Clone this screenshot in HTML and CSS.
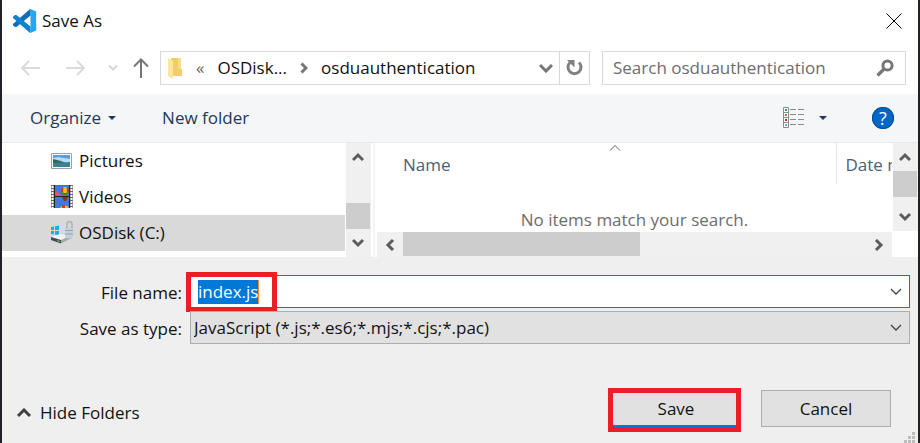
FILE: index.html
```html
<!DOCTYPE html>
<html lang="en">
<head>
    <meta charset="UTF-8">
    <meta name="viewport" content="width=device-width, initial-scale=1.0">
    <title>Save As</title>
    <link rel="stylesheet" href="styles.css">
</head>
<body>
    <main class="dialog">
        <header class="titlebar">
            <svg class="logo" width="24" height="24" viewBox="0 0 24 24">
                <path d="M17.5 0 23.2 2.5v19L17.5 24z" fill="#27a5f2"/>
                <path d="M17.5 0v6.6L3.4 17.9 2 18 0 16.3v-1.4L16.2.7z" fill="#0a6fb8"/>
                <path d="M17.5 24v-6.6L3.4 6.1 2 6 0 7.7v1.4l16.2 14.2z" fill="#0b83cf"/>
            </svg>
            <h1>Save As</h1>
            <button class="icon-btn close" aria-label="Close">
                <svg width="16" height="16" viewBox="0 0 16 16"><path d="M.5.5l15 15M15.5.5l-15 15" stroke="#000"/></svg>
            </button>
        </header>

        <nav class="nav-row">
            <div class="history">
                <button class="icon-btn" aria-label="Back" disabled>
                    <svg width="20" height="18" viewBox="0 0 20 18"><path d="M9 2L2 9l7 7M2 9h18" fill="none" stroke="#dadada" stroke-width="2"/></svg>
                </button>
                <button class="icon-btn" aria-label="Forward" disabled>
                    <svg width="20" height="18" viewBox="0 0 20 18"><path d="M11 2l7 7-7 7M18 9H0" fill="none" stroke="#dadada" stroke-width="2"/></svg>
                </button>
                <button class="icon-btn small" aria-label="Recent locations" disabled>
                    <svg width="10" height="8" viewBox="0 0 10 8"><path d="M1 1.5l4 4 4-4" fill="none" stroke="#d6d6d6" stroke-width="2"/></svg>
                </button>
                <button class="icon-btn small" aria-label="Up">
                    <svg width="16" height="20" viewBox="0 0 16 20"><path d="M1 8.500l7-7 7 7M8 2v18" fill="none" stroke="#767676" stroke-width="2"/></svg>
                </button>
            </div>
            <div class="address">
                <svg class="folder" width="16" height="22" viewBox="0 0 16 22">
                    <path d="M4 1h10v11h1v7H4z" fill="#f3cc66"/>
                    <path d="M11 1h3v11h-3z" fill="#f8dc85"/>
                    <path d="M1 1l5 3v18l-5-3z" fill="#fde59b"/>
                </svg>
                <span class="more">«</span>
                <a href="#">OSDisk...</a>
                <svg width="8" height="12" viewBox="0 0 8 12"><path d="M1.500 1.500L6 6l-4.500 4.500" fill="none" stroke="#767676" stroke-width="3"/></svg>
                <a href="#">osduauthentication</a>
                <button class="icon-btn expand" aria-label="Previous locations">
                    <svg width="14" height="10" viewBox="0 0 14 10"><path d="M1 2l6 6 6-6" fill="none" stroke="#767676" stroke-width="3"/></svg>
                </button>
                <button class="icon-btn refresh" aria-label="Refresh">
                    <svg width="18" height="18" viewBox="0 0 18 18">
                        <path d="M13 3.500a6.500 6.500 0 1 1-9 0" fill="none" stroke="#808080" stroke-width="3"/>
                        <path d="M1 1h7.500v7.500z" fill="#808080"/>
                    </svg>
                </button>
            </div>
            <label class="search">
                <input type="search" placeholder="Search osduauthentication" aria-label="Search osduauthentication">
                <svg width="18" height="18" viewBox="0 0 18 18"><circle cx="11.500" cy="6.500" r="4.600" fill="none" stroke="#767676" stroke-width="3"/><path d="M8 10l-6.500 6.500" stroke="#767676" stroke-width="3.200"/></svg>
            </label>
        </nav>

        <div class="toolbar">
            <button class="tool">Organize <span class="caret"></span></button>
            <button class="tool">New folder</button>
            <button class="icon-btn view" aria-label="Change your view">
                <svg width="22" height="22" viewBox="0 0 22 22">
                    <path d="M.5.500h5v20h-5zM.5 5.500h5M.5 10.500h5M.5 15.500h5" fill="#fff" stroke="#8c8c8c"/>
                    <path d="M7 2.500h6M15 2.500h6M7 7.500h6M15 7.500h6M7 12.500h6M15 12.500h6M7 17.500h6M15 17.500h6" stroke="#8c8c8c"/>
                    <path d="M2 2h2v2H2z" fill="#3b78c4"/><path d="M2 7h2v2H2z" fill="#7b8c2d"/><path d="M2 12h2v2H2z" fill="#c22"/><path d="M2 17h2v2H2z" fill="#7aa"/>
                </svg>
                <span class="caret"></span>
            </button>
            <button class="help" aria-label="Help">?</button>
        </div>

        <section class="browser">
            <ul class="tree">
                <li>
                    <svg width="24" height="24" viewBox="0 0 24 24">
                        <path d="M1.500 4.500h20v15h-20z" fill="#fff" stroke="#a0a0a0"/>
                        <path d="M3 6h17v12H3z" fill="#5b9be0"/>
                        <path d="M3 9l5-1 12 2v4H3z" fill="#b9dcf4"/>
                        <path d="M3 10l8 2 5 2H3z" fill="#2f6b50"/>
                        <path d="M3 14l17-1v5H3z" fill="#3f7f96"/>
                    </svg>
                    Pictures
                </li>
                <li>
                    <svg width="24" height="24" viewBox="0 0 24 24">
                        <path d="M1 0h22v23H1z" fill="#6b6b6b"/>
                        <path d="M2.500 1v22M21.500 1v22" stroke="#fff" stroke-width="2" stroke-dasharray="2 1"/>
                        <path d="M5 1h14v10H5zM5 12h14v11H5z" fill="#3f7bd8"/>
                        <path d="M4.500 0v23M19.500 0v23M4 11.500h16" stroke="#222"/>
                        <path d="M5 6l3 1 3 4H5z" fill="#d9596b"/>
                        <circle cx="15" cy="6" r="4" fill="#d33a26"/><path d="M13.500 2h3l.5 6h-4z" fill="#f2c21b"/><path d="M11 7h2l2 3h-1z" fill="#3b8f3d"/><path d="M19 7h-2l-2 3h1z" fill="#3b8f3d"/>
                        <path d="M12 12h6l-2 4h-2z" fill="#902d1d"/>
                        <path d="M10 23a5 5 0 0 1 9 0z" fill="#f2c21b"/><path d="M12 20h3v3h-3z" fill="#d33a26"/>
                    </svg>
                    Videos
                </li>
                <li class="selected">
                    <svg width="24" height="24" viewBox="0 0 24 24">
                        <path d="M1 6l3-.5V9H1zM5 5.300l4-.8V9H5zM1 10h3v3.500L1 13zM5 10h4v4.300l-4-.7z" fill="#08b4ee"/>
                        <path d="M1 16l9-3 12 2-11 5z" fill="#f2f2f2"/>
                        <path d="M1 16l10 3v3.500L1 19z" fill="#454a4c"/><path d="M11 19l11-5v3l-11 5.500z" fill="#a5a9aa"/>
                        <path d="M7 19l3 1v1l-3-1z" fill="#51df56"/>
                        <path d="M17 8V3q0-2.500 2.500-2.500T22 3v5" fill="none" stroke="#a9b5bb" stroke-width="1.600"/>
                        <path d="M15 7h8v9q-4 3-8 0z" fill="#c3d0d7"/><path d="M15 9.500h8M15 13h8" stroke="#8fa5b2"/>
                    </svg>
                    OSDisk (C:)
                </li>
            </ul>
            <div class="scroll vertical tree-scroll">
                <button aria-label="Scroll up"><svg width="12" height="10" viewBox="0 0 12 10"><path d="M1 8l5-5 5 5" fill="none" stroke="#5c5c5c" stroke-width="3"/></svg></button>
                <span class="thumb"></span>
                <button aria-label="Scroll down"><svg width="12" height="10" viewBox="0 0 12 10"><path d="M1 2l5 5 5-5" fill="none" stroke="#5c5c5c" stroke-width="3"/></svg></button>
            </div>
            <div class="splitter"></div>
            <div class="files">
                <div class="file-list">
                    <table>
                        <thead>
                            <tr>
                                <th class="name-col">Name</th>
                                <th class="date-col">Date modified</th>
                            </tr>
                        </thead>
                    </table>
                    <svg class="sort" width="12" height="8" viewBox="0 0 12 8"><path d="M1 6.500l5-5 5 5" fill="none" stroke="#606060"/></svg>
                    <p class="empty">No items match your search.</p>
                </div>
                <div class="scroll vertical file-scroll">
                    <button aria-label="Scroll up"><svg width="12" height="10" viewBox="0 0 12 10"><path d="M1 8l5-5 5 5" fill="none" stroke="#5c5c5c" stroke-width="3"/></svg></button>
                    <span class="thumb"></span>
                    <button aria-label="Scroll down"><svg width="12" height="10" viewBox="0 0 12 10"><path d="M1 2l5 5 5-5" fill="none" stroke="#5c5c5c" stroke-width="3"/></svg></button>
                </div>
                <div class="scroll horizontal">
                    <button aria-label="Scroll left"><svg width="10" height="12" viewBox="0 0 10 12"><path d="M8 1L3 6l5 5" fill="none" stroke="#5c5c5c" stroke-width="3"/></svg></button>
                    <span class="thumb"></span>
                    <button aria-label="Scroll right"><svg width="10" height="12" viewBox="0 0 10 12"><path d="M2 1l5 5-5 5" fill="none" stroke="#5c5c5c" stroke-width="3"/></svg></button>
                </div>
            </div>
        </section>

        <form class="save-form">
            <label for="filename">File name:</label>
            <div class="field filename">
                <input id="filename" type="text" value="index.js" autocomplete="off" spellcheck="false">
                <svg width="12" height="8" viewBox="0 0 12 8"><path d="M1 1l5 5 5-5" fill="none" stroke="#404040" stroke-width="1.300"/></svg>
                <span class="text-cursor"></span>
                <span class="highlight"></span>
            </div>
            <label for="filetype">Save as type:</label>
            <div class="field filetype">
                <select id="filetype">
                    <option>JavaScript (*.js;*.es6;*.mjs;*.cjs;*.pac)</option>
                </select>
                <svg width="12" height="8" viewBox="0 0 12 8"><path d="M1 1l5 5 5-5" fill="none" stroke="#404040" stroke-width="1.300"/></svg>
            </div>
        </form>

        <footer class="actions">
            <button class="hide-folders">
                <svg width="14" height="10" viewBox="0 0 14 10"><path d="M1 8l6-6 6 6" fill="none" stroke="#404040" stroke-width="3"/></svg>
                Hide Folders
            </button>
            <div class="save-wrap">
                <button class="btn primary">Save</button>
                <span class="highlight"></span>
            </div>
            <button class="btn">Cancel</button>
        </footer>
        <svg class="grip" width="12" height="12" viewBox="0 0 12 12"><path d="M8 0h3v3H8zM4 4h3v3H4zM8 4h3v3H8zM0 8h3v3H0zM4 8h3v3H4zM8 8h3v3H8z" fill="#bcbcbc"/></svg>
    </main>

    <script>
        // start with the suggested name selected
        const filename = document.getElementById('filename');
        filename.focus();
        filename.select();
    </script>
</body>
</html>
```
FILE: styles.css
```css
* {
    box-sizing: border-box;
}
body {
    margin: 0;
    background: #202124;
    font-family: "Open Sans", "Noto Sans", sans-serif;
    font-size: 17px;
    line-height: 24px;
    color: #111;
}
button, input, select {
    font: inherit;
    color: inherit;
    margin: 0;
    padding: 0;
    border: none;
    background: none;
}
svg {
    display: block;
    flex: none;
}
.dialog {
    position: relative;
    display: flex;
    flex-direction: column;
    min-height: 100vh;
    margin: 0 2px;
    background: #efefef;
}
.icon-btn {
    display: flex;
    align-items: center;
    justify-content: center;
}

/* title bar */
.titlebar {
    display: flex;
    align-items: center;
    height: 42px;
    padding: 0 16px 0 11px;
    background: #fff;
}
.titlebar h1 {
    flex: 1;
    margin: 0 0 0 5px;
    font-size: 17px;
    font-weight: 400;
}

/* navigation */
.nav-row {
    display: grid;
    grid-template-columns: 146px 430fr 304fr;
    column-gap: 12px;
    padding: 9px 12px 9px 0;
    background: #fff;
}
.history {
    display: flex;
    align-items: center;
    padding-left: 5px;
}
.history .icon-btn {
    flex: none;
    width: 46px;
}
.history .small {
    width: 28px;
}
.address {
    display: flex;
    align-items: center;
    height: 34px;
    padding-left: 6px;
    border: 1px solid #d9d9d9;
    white-space: nowrap;
}
.address a {
    margin: 0 13px;
    color: #111;
    text-decoration: none;
}
.address .more {
    margin-left: 13px;
    color: #666;
}
.expand {
    width: 26px;
    height: 32px;
    margin-left: auto;
}
.refresh {
    width: 30px;
    height: 32px;
    border-left: 1px solid #d9d9d9;
}
.search {
    display: flex;
    align-items: center;
    height: 34px;
    padding: 0 11px 0 10px;
    border: 1px solid #d9d9d9;
}
.search input {
    flex: 1;
    min-width: 0;
    outline: none;
}
.search input::placeholder {
    color: #6d6d6d;
}

/* command bar */
.toolbar {
    display: flex;
    align-items: center;
    height: 49px;
    padding: 0 24px 0 28px;
    background: #f5f6f7;
    border-bottom: 1px solid #e6e9ee;
}
.tool {
    display: flex;
    align-items: center;
    margin-right: 46px;
    color: #1e395b;
}
.caret {
    margin-left: 7px;
    border: 4px solid transparent;
    border-top-color: #1e395b;
    border-bottom: none;
}
.view {
    margin-left: auto;
}
.view .caret {
    margin-left: 14px;
}
.help {
    width: 22px;
    height: 22px;
    margin-left: 45px;
    border-radius: 50%;
    background: #0067c6;
    box-shadow: inset 0 0 0 1px #0a4f94;
    color: #fff;
    font-size: 18px;
    line-height: 22px;
}

/* folders and files */
.browser {
    display: flex;
    height: 114px;
    background: #fff;
}
.tree {
    width: 343px;
    margin: 0;
    padding: 0;
    list-style: none;
}
.tree li {
    display: flex;
    align-items: center;
    gap: 5px;
    height: 36px;
    padding-left: 48px;
}
.tree .selected {
    background: #d9d9d9;
}
.scroll {
    display: flex;
    background: #f0f0f0;
}
.scroll button {
    display: flex;
    align-items: center;
    justify-content: center;
    flex: none;
    width: 26px;
    height: 26px;
}
.scroll .thumb {
    background: #cdcdcd;
}
.vertical {
    flex-direction: column;
    justify-content: space-between;
    width: 25px;
}
.vertical button {
    width: 24px;
    height: 28px;
}
.vertical .thumb {
    height: 26px;
    margin-right: 1px;
}
.tree-scroll {
    margin-left: 1px;
}
.tree-scroll .thumb {
    margin-top: auto;
}
.file-scroll .thumb {
    margin-bottom: auto;
}
.splitter {
    width: 2px;
    margin: 0 2px;
    background: #f4f4f4;
}
.files {
    display: grid;
    grid-template-columns: 1fr 25px;
    grid-template-rows: 1fr 25px;
    flex: 1;
    min-width: 0;
    gap: 1px;
}
.file-list {
    position: relative;
    overflow: hidden;
}
.file-list table {
    width: 100%;
    table-layout: fixed;
    border-collapse: collapse;
}
.file-list th {
    height: 41px;
    padding: 2px 0 0;
    color: #4c607a;
    font-weight: 400;
    text-align: left;
    white-space: nowrap;
}
.file-list .name-col {
    padding-left: 26px;
    border-right: 1px solid #e5e5e5;
}
.file-list .date-col {
    width: 56px;
    padding-left: 9px;
    overflow: hidden;
}
.sort {
    position: absolute;
    top: 1px;
    left: calc(50% - 26px);
}
.empty {
    margin: 24px 0 0;
    color: #6d6d6d;
    text-align: center;
}
.horizontal {
    justify-content: space-between;
}
.horizontal .thumb {
    width: 46%;
    margin: 0 auto 1px 0;
}

/* file name and type */
.save-form {
    display: grid;
    grid-template-columns: 180px 1fr;
    align-items: center;
    column-gap: 8px;
    row-gap: 3px;
    padding: 18px 8px 0 0;
}
.save-form label {
    padding-top: 2px;
    text-align: right;
}
.field {
    position: relative;
    display: flex;
    align-items: center;
    height: 33px;
    padding: 0 7px 0 3px;
}
.field input, .field select {
    flex: 1;
    min-width: 0;
    outline: none;
    appearance: none;
}
.filename {
    padding-left: 7px;
    border: 1px solid #0078d7;
    background: #fff;
}
.filename input::selection {
    background: #0078d7;
    color: #fff;
}
.text-cursor {
    position: absolute;
    top: 4px;
    left: 67px;
    width: 1px;
    height: 24px;
    background: #ff8728;
}
.filetype {
    border: 1px solid #adadad;
    background: #e1e1e1;
}
.highlight {
    position: absolute;
    border: 5px solid #ee1c25;
    pointer-events: none;
}
.filename .highlight {
    top: -4px;
    left: -5px;
    width: 91px;
    height: 40px;
}

/* buttons */
.actions {
    display: flex;
    align-items: center;
    gap: 20px;
    padding: 46px 27px 16px 15px;
}
.hide-folders {
    display: flex;
    align-items: center;
    gap: 9px;
    margin: 8px auto 0 0;
}
.btn {
    width: 130px;
    height: 37px;
    border: 1px solid #adadad;
    background: #e1e1e1;
}
.primary {
    border: 2px solid #0078d7;
}
.save-wrap {
    position: relative;
    display: flex;
}
.save-wrap .highlight {
    inset: -2px 0 -5px -3px;
}
.grip {
    position: absolute;
    right: 2px;
    bottom: -1px;
}
```
